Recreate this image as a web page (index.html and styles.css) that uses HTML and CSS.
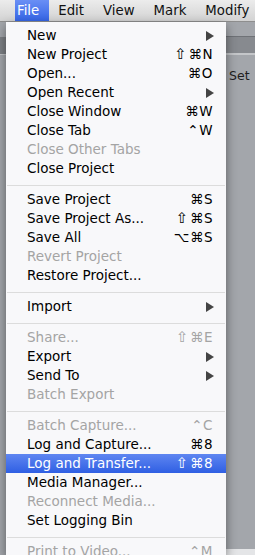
FILE: index.html
```html
<!DOCTYPE html>
<html lang="en">
  <head>
    <meta charset="UTF-8" />
    <meta name="viewport" content="width=device-width, initial-scale=1.0" />
    <title>File Menu</title>
    <link rel="stylesheet" href="styles.css">
  </head>
  <body>
    <div class="menubar">
      <span class="title active">File</span>
      <span class="title">Edit</span>
      <span class="title">View</span>
      <span class="title">Mark</span>
      <span class="title">Modify</span>
    </div>

    <div class="workspace">
      <div class="edge">
        <div class="band"></div>
      </div>

      <div class="menu">
        <div class="item"><span>New</span><svg class="arrow" width="8" height="10"><polygon points="0,0 8,5 0,10" /></svg></div>
        <div class="item"><span>New Project</span><span class="key"><span class="shift">⇧</span>⌘N</span></div>
        <div class="item"><span>Open...</span><span class="key">⌘O</span></div>
        <div class="item"><span>Open Recent</span><svg class="arrow" width="8" height="10"><polygon points="0,0 8,5 0,10" /></svg></div>
        <div class="item"><span>Close Window</span><span class="key">⌘W</span></div>
        <div class="item"><span>Close Tab</span><span class="key">⌃W</span></div>
        <div class="item disabled"><span>Close Other Tabs</span></div>
        <div class="item"><span>Close Project</span></div>
        <div class="sep"></div>
        <div class="item"><span>Save Project</span><span class="key">⌘S</span></div>
        <div class="item"><span>Save Project As...</span><span class="key"><span class="shift">⇧</span>⌘S</span></div>
        <div class="item"><span>Save All</span><span class="key">⌥⌘S</span></div>
        <div class="item disabled"><span>Revert Project</span></div>
        <div class="item"><span>Restore Project...</span></div>
        <div class="sep"></div>
        <div class="item"><span>Import</span><svg class="arrow" width="8" height="10"><polygon points="0,0 8,5 0,10" /></svg></div>
        <div class="sep"></div>
        <div class="item disabled"><span>Share...</span><span class="key"><span class="shift">⇧</span>⌘E</span></div>
        <div class="item"><span>Export</span><svg class="arrow" width="8" height="10"><polygon points="0,0 8,5 0,10" /></svg></div>
        <div class="item"><span>Send To</span><svg class="arrow" width="8" height="10"><polygon points="0,0 8,5 0,10" /></svg></div>
        <div class="item disabled"><span>Batch Export</span></div>
        <div class="sep"></div>
        <div class="item disabled"><span>Batch Capture...</span><span class="key">⌃C</span></div>
        <div class="item"><span>Log and Capture...</span><span class="key">⌘8</span></div>
        <div class="item selected"><span>Log and Transfer...</span><span class="key"><span class="shift">⇧</span>⌘8</span></div>
        <div class="item"><span>Media Manager...</span></div>
        <div class="item disabled"><span>Reconnect Media...</span></div>
        <div class="item"><span>Set Logging Bin</span></div>
        <div class="sep"></div>
        <div class="item disabled"><span>Print to Video...</span><span class="key">⌃M</span></div>
      </div>

      <div class="backdrop">
        <div class="band"></div>
        <div class="label">Set</div>
        <div class="fill"></div>
        <div class="foot"></div>
      </div>
    </div>
  </body>
</html>
```

FILE: styles.css
```css
* {
  margin: 0;
  padding: 0;
  box-sizing: border-box;
}

body {
  font-family: "DejaVu Sans", sans-serif;
  font-size: 13.5px;
  width: 255px;
  height: 555px;
  overflow: hidden;
  background-color: #a3a6ab;
  display: flex;
  flex-direction: column;
}

.menubar {
  height: 22px;
  flex-shrink: 0;
  display: flex;
  align-items: stretch;
  background: linear-gradient(#ececec, #d3d3d3);
  border-bottom: 1px solid #8e8e8e;
  color: #111;
  font-size: 13.3px;
}

.title {
  display: flex;
  align-items: center;
  padding: 0 9.5px;
  line-height: 21px;
}

.title.active {
  padding: 0 9.5px 0 2px;
  margin-left: 15px;
  color: #fff;
  background: linear-gradient(#6a8ff5, #3565e6);
}

.workspace {
  flex: 1;
  display: flex;
  min-height: 0;
}

.edge {
  width: 6px;
  flex-shrink: 0;
  display: flex;
  flex-direction: column;
  background-color: #a3a6ab;
}

.edge .band {
  margin-top: 15px;
  height: 18px;
  background-color: #7d8085;
  border-bottom: 1px solid #c3c5c8;
}

.menu {
  width: 220px;
  flex-shrink: 0;
  padding-top: 4px;
  background-color: rgba(250, 250, 251, 0.98);
  box-shadow: 0 4px 10px rgba(0, 0, 0, 0.45);
  z-index: 1;
  color: #000;
}

.item {
  height: 19px;
  line-height: 19px;
  padding: 0 13px 0 21px;
  display: flex;
  justify-content: space-between;
  align-items: center;
  white-space: nowrap;
}

.item .key {
  letter-spacing: 0.5px;
}

.shift {
  font-size: 15px;
  margin-right: 1px;
}

.arrow {
  fill: #444;
  margin-right: -1px;
}

.disabled {
  color: #a4a4a4;
}

.selected {
  color: #fff;
  background: linear-gradient(#5f86f1, #2f5fe3);
}

.sep {
  height: 12px;
  padding-top: 7px;
}

.sep::after {
  content: "";
  display: block;
  height: 1px;
  margin: 0 1px;
  background-color: #dcdcdc;
}

.backdrop {
  flex: 1;
  display: flex;
  flex-direction: column;
}

.backdrop .band {
  margin-top: 14px;
  height: 19px;
  background-color: #878a8f;
  border-top: 1px solid #6f7277;
  border-bottom: 2px solid #c4c6c9;
}

.label {
  margin-top: 13px;
  padding-left: 3px;
  font-size: 12.5px;
  color: #1e1e1e;
}

.fill {
  flex: 1;
}

.foot {
  height: 6px;
  background-color: #e4e5e7;
}
```
